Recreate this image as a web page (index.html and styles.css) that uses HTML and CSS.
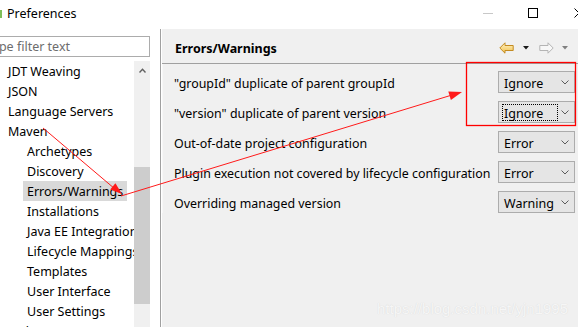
FILE: index.html
```html
<!DOCTYPE html>
<html>
<head>
<meta charset="utf-8">
<link rel="stylesheet" href="styles.css">
</head>
<body>
<div class="window">
  <div class="titlebar">
    <span class="app-icon"></span>
    <span class="title">Preferences</span>
    <div class="controls">
      <span class="ctl ctl-min"><span class="min-line"></span></span>
      <span class="ctl ctl-max"><span class="max-box"></span></span>
      <span class="ctl ctl-close">
        <svg width="10" height="10" viewBox="0 0 10 10"><path d="M0.5 0.5 L9.5 9.5 M9.5 0.5 L0.5 9.5" stroke="#000" stroke-width="1" fill="none"/></svg>
      </span>
    </div>
  </div>
  <div class="main">
    <div class="left">
      <div class="filter"><span class="filter-text">type filter text</span></div>
      <div class="tree-wrap">
        <ul class="tree">
          <li class="lvl0">JDT Weaving</li>
          <li class="lvl0">JSON</li>
          <li class="lvl0">Language Servers</li>
          <li class="lvl0">Maven</li>
          <li class="lvl1">Archetypes</li>
          <li class="lvl1">Discovery</li>
          <li class="lvl1 selected"><span class="sel">Errors/Warnings</span></li>
          <li class="lvl1">Installations</li>
          <li class="lvl1">Java EE Integration</li>
          <li class="lvl1">Lifecycle Mappings</li>
          <li class="lvl1">Templates</li>
          <li class="lvl1">User Interface</li>
          <li class="lvl1">User Settings</li>
          <li class="lvl0">Mylyn</li>
        </ul>
        <div class="vscroll">
          <div class="vs-up">
            <svg width="7" height="5" viewBox="0 0 7 5"><path d="M0.5 4.5 L3.5 1.2 L6.5 4.5" stroke="#606060" stroke-width="1.4" fill="none"/></svg>
          </div>
          <div class="vs-gap"></div>
          <div class="vs-thumb"></div>
        </div>
        <div class="left-pad"></div>
      </div>
    </div>
    <div class="divider"></div>
    <div class="right">
      <div class="header">
        <h2 class="page-title">Errors/Warnings</h2>
        <div class="nav">
          <svg class="nav-arrow back" width="15" height="12" viewBox="0 0 15 12">
            <defs>
              <linearGradient id="bk" x1="0" y1="0" x2="0" y2="1">
                <stop offset="0" stop-color="#fff4c8"/>
                <stop offset="1" stop-color="#f2c04a"/>
              </linearGradient>
            </defs>
            <path d="M0.8 6 L6 0.8 L6 3.5 L14.2 3.5 L14.2 8.5 L6 8.5 L6 11.2 Z" fill="url(#bk)" stroke="#c38b22" stroke-width="1" stroke-linejoin="round"/>
          </svg>
          <svg class="nav-drop d1" width="6" height="4" viewBox="0 0 6 4"><path d="M0 0 L6 0 L3 3.5 Z" fill="#1a1a1a"/></svg>
          <svg class="nav-arrow fwd" width="15" height="12" viewBox="0 0 15 12">
            <path d="M14.2 6 L9 0.8 L9 3.5 L0.8 3.5 L0.8 8.5 L9 8.5 L9 11.2 Z" fill="#f7f7f7" stroke="#b4b4b4" stroke-width="1" stroke-linejoin="round"/>
          </svg>
          <svg class="nav-drop d2" width="6" height="4" viewBox="0 0 6 4"><path d="M0 0 L6 0 L3 3.5 Z" fill="#808080"/></svg>
        </div>
      </div>
      <div class="rows">
        <div class="row">
          <span class="label">"groupId" duplicate of parent groupId</span>
          <div class="combo"><span class="combo-text">Ignore</span><span class="chev"><svg width="8" height="5" viewBox="0 0 8 5"><path d="M0.5 0.5 L4 4 L7.5 0.5" stroke="#5a5a5a" stroke-width="1" fill="none"/></svg></span></div>
        </div>
        <div class="row">
          <span class="label">"version" duplicate of parent version</span>
          <div class="combo"><span class="combo-text focus">Ignore</span><span class="chev"><svg width="8" height="5" viewBox="0 0 8 5"><path d="M0.5 0.5 L4 4 L7.5 0.5" stroke="#5a5a5a" stroke-width="1" fill="none"/></svg></span></div>
        </div>
        <div class="row">
          <span class="label">Out-of-date project configuration</span>
          <div class="combo"><span class="combo-text">Error</span><span class="chev"><svg width="8" height="5" viewBox="0 0 8 5"><path d="M0.5 0.5 L4 4 L7.5 0.5" stroke="#5a5a5a" stroke-width="1" fill="none"/></svg></span></div>
        </div>
        <div class="row">
          <span class="label">Plugin execution not covered by lifecycle configuration</span>
          <div class="combo"><span class="combo-text">Error</span><span class="chev"><svg width="8" height="5" viewBox="0 0 8 5"><path d="M0.5 0.5 L4 4 L7.5 0.5" stroke="#5a5a5a" stroke-width="1" fill="none"/></svg></span></div>
        </div>
        <div class="row">
          <span class="label">Overriding managed version</span>
          <div class="combo"><span class="combo-text">Warning</span><span class="chev"><svg width="8" height="5" viewBox="0 0 8 5"><path d="M0.5 0.5 L4 4 L7.5 0.5" stroke="#5a5a5a" stroke-width="1" fill="none"/></svg></span></div>
        </div>
      </div>
    </div>
  </div>
  <svg class="annot" width="578" height="327" viewBox="0 0 578 327">
    <rect x="466.5" y="62.5" width="109" height="63" fill="none" stroke="#ff0000" stroke-width="1.3"/>
    <line x1="43" y1="128" x2="115" y2="189" stroke="#ff1a1a" stroke-width="1"/>
    <polygon points="122,194 110.2,189.4 115.4,183.2" fill="#ff1a1a"/>
    <line x1="121" y1="196" x2="452" y2="95" stroke="#ff1a1a" stroke-width="1"/>
    <polygon points="462,92 450.9,100 448.3,91.4" fill="#ff1a1a"/>
  </svg>
  <div class="watermark">https://blog.csdn.net/yjn1995</div>
</div>
</body>
</html>
```
FILE: styles.css
```css
* { box-sizing: border-box; }
html, body { margin: 0; padding: 0; }
body {
  width: 578px;
  height: 327px;
  overflow: hidden;
  background: #ffffff;
  font-family: "Noto Sans", "Open Sans", sans-serif;
  font-size: 12px;
  color: #000;
}
.window {
  position: relative;
  width: 578px;
  height: 327px;
  overflow: hidden;
  display: flex;
  flex-direction: column;
}
.titlebar {
  height: 29px;
  flex: none;
  display: flex;
  align-items: center;
  background: #fff;
}
.app-icon {
  width: 10px;
  height: 8px;
  margin-left: -8px;
  margin-top: -1px;
  background: #7fbf5a;
}
.title {
  margin-left: 5px;
  font-size: 12.5px;
  margin-top: -2px;
}
.controls {
  margin-left: auto;
  display: flex;
  align-items: center;
  height: 29px;
}
.ctl { display: flex; align-items: center; justify-content: center; height: 29px; }
.ctl-min { width: 10px; margin-right: 35px; }
.min-line { width: 10px; height: 1px; background: #c8c8c8; margin-top: -3px; }
.ctl-max { width: 10px; margin-right: 36px; }
.max-box { width: 10px; height: 10px; border: 1px solid #000; margin-top: -4px; }
.ctl-close { width: 4px; overflow: hidden; justify-content: flex-start; }
.ctl-close svg { margin-top: -4px; flex: none; }

.main {
  flex: 1;
  display: flex;
  min-height: 0;
}
.left {
  width: 160px;
  flex: none;
  background: #fff;
  display: flex;
  flex-direction: column;
  overflow: hidden;
}
.filter {
  margin-top: 7px;
  margin-left: -18px;
  width: 168px;
  height: 21px;
  border: 1px solid #acacac;
  display: flex;
  align-items: center;
  padding-left: 5px;
  flex: none;
}
.filter-text { color: #6d6d6d; font-size: 12.5px; margin-top: 0; }
.tree-wrap {
  margin-top: 4px;
  flex: 1;
  display: flex;
  min-height: 0;
}
.tree {
  list-style: none;
  margin: 0;
  padding: 1px 0 0 0;
  width: 134px;
  flex: none;
  overflow: hidden;
  white-space: nowrap;
}
.tree li {
  height: 20px;
  line-height: 20px;
  font-size: 12.5px;
}
.tree li.lvl0 { padding-left: 8px; }
.tree li.lvl1 { padding-left: 27px; }
.tree li.selected { padding-left: 23px; }
.sel {
  display: inline-block;
  background: #d9d9d9;
  padding: 0 4px;
  width: 104px;
  height: 20px;
  margin-top: -1px;
  line-height: 21px;
  vertical-align: top;
}
.vscroll {
  width: 16px;
  flex: none;
  background: #f0f0f0;
  display: flex;
  flex-direction: column;
}
.vs-up {
  height: 18px;
  display: flex;
  align-items: center;
  justify-content: center;
}
.vs-gap { height: 88px; }
.vs-thumb {
  height: 137px;
  background: #cdcdcd;
}
.left-pad { flex: 1; }

.divider {
  width: 2px;
  flex: none;
  border-left: 1px solid #a0a0a0;
  background: #fff;
}
.right {
  flex: 1;
  background: #f0f0f0;
  display: flex;
  flex-direction: column;
}
.header {
  height: 35px;
  flex: none;
  display: flex;
  align-items: center;
  border-bottom: 1px solid #a0a0a0;
  padding-left: 13px;
}
.page-title {
  margin: 0;
  font-size: 12.5px;
  font-weight: bold;
  margin-top: 5px;
}
.nav {
  margin-left: auto;
  display: flex;
  align-items: center;
  margin-right: 10px;
  margin-top: 4px;
}
.nav-drop.d1 { margin-left: 9px; }
.nav-arrow.fwd { margin-left: 10px; }
.nav-drop.d2 { margin-left: 8px; }
.rows {
  padding-top: 7px;
  padding-right: 3px;
  display: flex;
  flex-direction: column;
  gap: 8px;
  border-left: 1px solid #f7f7f7;
}
.row {
  height: 22px;
  display: flex;
  align-items: center;
  padding-left: 11px;
}
.label {
  flex: 1;
  font-size: 12.4px;
  white-space: nowrap;
  margin-top: 2px;
}
.combo {
  width: 77px;
  height: 22px;
  flex: none;
  background: #e5e5e5;
  border: 1px solid #acacac;
  display: flex;
  align-items: center;
  padding-left: 3px;
}
.combo-text {
  font-size: 12.5px;
  padding: 0 1px;
  height: 17px;
  line-height: 17px;
  width: 56px;
  border: 1px dotted transparent;
  margin-top: 1px;
}
.combo-text.focus { border-color: #000; }
.chev {
  margin-left: auto;
  margin-right: 5px;
  display: flex;
  margin-top: 1px;
}

.annot {
  position: absolute;
  left: 0;
  top: 0;
  pointer-events: none;
}
.watermark {
  position: absolute;
  right: 10px;
  bottom: 10px;
  font-family: "Liberation Sans", Arial, sans-serif;
  font-size: 15px;
  color: #f6f6f6;
  text-shadow: 0 0 1px #d4d4d4;
  pointer-events: none;
}
```
